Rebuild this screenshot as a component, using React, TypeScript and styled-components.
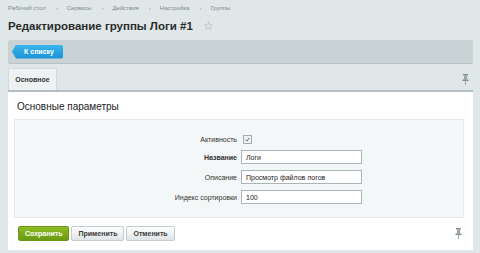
import styled, { createGlobalStyle } from "styled-components";

const GlobalStyle = createGlobalStyle`
  html, body {
    margin: 0;
    padding: 0;
    background: #dfe7e9;
    font-family: "Liberation Sans", Arial, sans-serif;
  }
`;

const crumbs = ["Рабочий стол", "Сервисы", "Действия", "Настройка", "Группы"];

const fields = [
  { label: "Название", value: "Логи", bold: true },
  { label: "Описание", value: "Просмотр файлов логов", bold: false },
  { label: "Индекс сортировки", value: "100", bold: false },
];

const Pin = () => (
  <svg width="7" height="11" viewBox="0 0 7 11">
    <rect x="1" y="0" width="5" height="1.5" fill="#7f8d93" />
    <rect x="2" y="1.5" width="3" height="4" fill="#98a5aa" />
    <rect x="0.5" y="5.5" width="6" height="1.5" fill="#7f8d93" />
    <rect x="3" y="7" width="1" height="4" fill="#9aa6ab" />
  </svg>
);

const Check = () => (
  <svg width="5" height="5" viewBox="0 0 5 5">
    <path d="M0.6 2.6 L2 4 L4.5 0.8" stroke="#4a5a62" strokeWidth="0.9" fill="none" />
  </svg>
);

export default function App() {
  return (
    <>
      <GlobalStyle />
      <Page>
        <Breadcrumbs>
          {crumbs.map((c, i) => (
            <Crumb key={c}>
              {c}
              {i < crumbs.length - 1 && <Sep>›</Sep>}
            </Crumb>
          ))}
        </Breadcrumbs>

        <TitleRow>
          <Title>Редактирование группы Логи #1</Title>
          <Star>☆</Star>
        </TitleRow>

        <Toolbar>
          <BackButton>К списку</BackButton>
        </Toolbar>

        <TabRow>
          <Tab>Основное</Tab>
          <Pin />
        </TabRow>

        <Panel>
          <Heading>Основные параметры</Heading>
          <FormBox>
            <FormGrid>
              <Label>Активность</Label>
              <Checkbox>
                <Check />
              </Checkbox>
              {fields.map((f) => (
                <Row key={f.label}>
                  <Label $bold={f.bold}>{f.label}</Label>
                  <Input>{f.value}</Input>
                </Row>
              ))}
            </FormGrid>
          </FormBox>

          <Footer>
            <Buttons>
              <Button $primary>Сохранить</Button>
              <Button>Применить</Button>
              <Button>Отменить</Button>
            </Buttons>
            <Pin />
          </Footer>
        </Panel>
      </Page>
    </>
  );
}

const Page = styled.div`
  padding: 0 7px 0 8px;
`;

const Breadcrumbs = styled.div`
  display: flex;
  align-items: center;
  height: 14px;
  padding-top: 1px;
  font-size: 6px;
  color: #7b8a91;
`;

const Crumb = styled.span`
  display: flex;
  align-items: center;
`;

const Sep = styled.span`
  margin: 0 9px 0 10px;
  color: #9aa6ab;
`;

const TitleRow = styled.div`
  display: flex;
  align-items: center;
  height: 20px;
  margin-top: 1px;
`;

const Title = styled.h1`
  margin: 0;
  font-size: 11.5px;
  font-weight: bold;
  color: #2b2b2b;
`;

const Star = styled.span`
  margin-left: 10px;
  font-size: 12px;
  color: #9aa3a7;
`;

const Toolbar = styled.div`
  margin-top: 4px;
  height: 24px;
  background: #c9d3d6;
  border-bottom: 1px solid #b7c2c6;
  border-radius: 2px;
  display: flex;
  align-items: center;
  padding-left: 4px;
  box-sizing: border-box;
`;

const BackButton = styled.div`
  height: 14px;
  width: 51px;
  display: flex;
  align-items: center;
  justify-content: center;
  padding-left: 3px;
  box-sizing: border-box;
  background: linear-gradient(#3cb6ee, #1892d3);
  color: #fff;
  font-size: 7px;
  font-weight: bold;
  border-radius: 0 2px 2px 0;
  clip-path: polygon(4px 0, 100% 0, 100% 100%, 4px 100%, 0 50%);
`;

const TabRow = styled.div`
  margin-top: 4px;
  display: flex;
  align-items: flex-end;
  justify-content: space-between;
  padding-right: 4px;
  svg {
    margin-bottom: 5px;
  }
`;

const Tab = styled.div`
  width: 49px;
  height: 22px;
  box-sizing: border-box;
  background: #eef2f3;
  border: 1px solid #d2dadd;
  border-bottom: none;
  display: flex;
  align-items: center;
  justify-content: center;
  font-size: 7px;
  font-weight: bold;
  color: #333;
`;

const Panel = styled.div`
  background: #fff;
  border-top: 2px solid #b3bec2;
  padding: 0 9px 9px 6px;
`;

const Heading = styled.div`
  height: 26px;
  display: flex;
  align-items: center;
  padding-left: 3px;
  padding-top: 1px;
  font-size: 10px;
  color: #222;
`;

const FormBox = styled.div`
  background: #f4f7f8;
  border: 1px solid #e4e9eb;
  padding: 15px 0 13px;
`;

const FormGrid = styled.div`
  display: grid;
  grid-template-columns: 222px 121px;
  column-gap: 4px;
  row-gap: 6px;
  align-items: center;
`;

const Row = styled.div`
  display: contents;
`;

const Label = styled.div<{ $bold?: boolean }>`
  text-align: right;
  font-size: 7px;
  color: #333;
  font-weight: ${({ $bold }) => ($bold ? "bold" : "normal")};
`;

const Checkbox = styled.div`
  width: 7px;
  height: 7px;
  margin-left: 2px;
  border: 1px solid #a4adb1;
  background: #f0f3f4;
  display: flex;
  align-items: center;
  justify-content: center;
`;

const Input = styled.div`
  height: 14px;
  box-sizing: border-box;
  border: 1px solid #a9b4b8;
  background: #fff;
  display: flex;
  align-items: center;
  padding-left: 4px;
  font-size: 7px;
  color: #222;
`;

const Footer = styled.div`
  margin-top: 8px;
  display: flex;
  align-items: center;
  justify-content: space-between;
  padding-left: 4px;
  padding-right: 2px;
`;

const Buttons = styled.div`
  display: flex;
  gap: 2px;
`;

const Button = styled.div<{ $primary?: boolean }>`
  height: 15px;
  padding: 0 6px;
  display: flex;
  align-items: center;
  box-sizing: border-box;
  border-radius: 2px;
  font-size: 7px;
  font-weight: bold;
  color: ${({ $primary }) => ($primary ? "#fff" : "#3a3a3a")};
  background: ${({ $primary }) =>
    $primary ? "linear-gradient(#8ebc22, #6a9a10)" : "linear-gradient(#ffffff, #dfe5e7)"};
  border: 1px solid ${({ $primary }) => ($primary ? "#6d9414" : "#c5cdd0")};
`;
